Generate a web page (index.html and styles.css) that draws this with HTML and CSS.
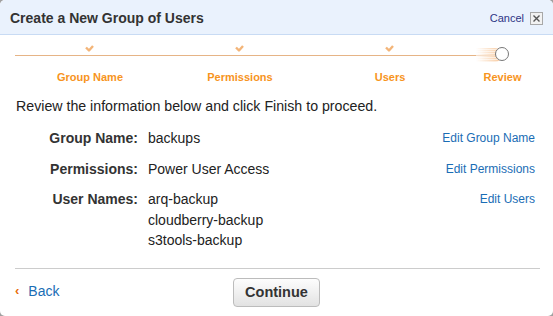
FILE: index.html
```html
<!DOCTYPE html>
<html>
<head>
<meta charset="utf-8">
<link rel="stylesheet" href="styles.css">
</head>
<body>
<div class="dialog">
  <div class="header">
    <div class="title">Create a New Group of Users</div>
    <div class="cancel">
      <span class="cancel-text">Cancel</span>
      <span class="close-box"><svg width="9" height="9" viewBox="0 0 9 9"><path d="M1.5 1.5 L7.5 7.5 M7.5 1.5 L1.5 7.5" stroke="#555" stroke-width="1.4" fill="none"/></svg></span>
    </div>
  </div>

  <div class="progress">
    <div class="track"></div>
    <div class="step">
      <div class="mark"><svg class="check" width="9" height="7" viewBox="0 0 9 7"><path d="M1 2.5 L4 5.5 L8 1" stroke="#f3b579" stroke-width="2.4" fill="none" stroke-linejoin="round"/></svg></div>
      <div class="label">Group Name</div>
    </div>
    <div class="step">
      <div class="mark"><svg class="check" width="9" height="7" viewBox="0 0 9 7"><path d="M1 2.5 L4 5.5 L8 1" stroke="#f3b579" stroke-width="2.4" fill="none" stroke-linejoin="round"/></svg></div>
      <div class="label">Permissions</div>
    </div>
    <div class="step">
      <div class="mark"><svg class="check" width="9" height="7" viewBox="0 0 9 7"><path d="M1 2.5 L4 5.5 L8 1" stroke="#f3b579" stroke-width="2.4" fill="none" stroke-linejoin="round"/></svg></div>
      <div class="label">Users</div>
    </div>
    <div class="step current">
      <div class="mark"><span class="glow"></span><span class="circle"></span></div>
      <div class="label">Review</div>
    </div>
  </div>

  <p class="intro">Review the information below and click Finish to proceed.</p>

  <div class="summary">
    <div class="key">Group Name:</div>
    <div class="val">backups</div>
    <a class="edit" href="#">Edit Group Name</a>

    <div class="key">Permissions:</div>
    <div class="val">Power User Access</div>
    <a class="edit" href="#">Edit Permissions</a>

    <div class="key">User Names:</div>
    <div class="val">arq-backup<br>cloudberry-backup<br>s3tools-backup</div>
    <a class="edit" href="#">Edit Users</a>
  </div>

  <div class="divider"></div>

  <div class="footer">
    <a class="back" href="#"><span class="chev">&lsaquo;</span>Back</a>
    <button class="continue">Continue</button>
    <span></span>
  </div>
</div>
</body>
</html>
```

FILE: styles.css
```css
html, body {
  margin: 0;
  padding: 0;
}
body {
  background: #a0a0a0;
  font-family: "Liberation Sans", Arial, Helvetica, sans-serif;
  color: #333;
}
.dialog {
  width: 553px;
  height: 316px;
  background: #fff;
  border-radius: 5px;
  overflow: hidden;
}
.header {
  box-sizing: border-box;
  height: 35px;
  border-bottom: 1px solid #c8dbf4;
  background: #eaf2fd;
  display: flex;
  align-items: center;
  justify-content: space-between;
  padding: 0 10px 0 10px;
}
.title {
  font-size: 14px;
  font-weight: bold;
  color: #333;
  padding-top: 1px;
}
.cancel {
  display: flex;
  align-items: center;
  gap: 6px;
  padding-top: 2px;
}
.cancel-text {
  font-size: 11px;
  color: #2e3585;
}
.close-box {
  width: 11px;
  height: 11px;
  border: 1px solid #a8a8a8;
  background: #f2f2f2;
  display: flex;
  align-items: center;
  justify-content: center;
}
.progress {
  position: relative;
  margin: 10px 13px 0 15px;
  display: grid;
  grid-template-columns: 150px 150px 150px 1fr;
}
.track {
  position: absolute;
  left: 0;
  right: 38px;
  top: 10px;
  height: 1px;
  background: #e6b486;
}
.step {
  display: flex;
  flex-direction: column;
  align-items: center;
}
.mark {
  position: relative;
  height: 20px;
  width: 14px;
}
.check {
  position: absolute;
  left: 2px;
  top: 0;
}
.circle {
  position: absolute;
  left: -1px;
  top: 2px;
  width: 12px;
  height: 12px;
  border: 1.5px solid #777;
  border-radius: 50%;
  background: #fff;
}
.glow {
  position: absolute;
  right: 8px;
  top: 3px;
  width: 26px;
  height: 14px;
  background:
    repeating-linear-gradient(to bottom, rgba(255,255,255,0) 0, rgba(255,255,255,0) 1px, rgba(255,255,255,0.55) 1px, rgba(255,255,255,0.55) 2px),
    linear-gradient(to right, rgba(246,190,140,0) 0%, rgba(246,186,130,0.8) 100%);
  border-radius: 0 7px 7px 0;
}
.label {
  margin-top: 5px;
  font-size: 11px;
  line-height: 14px;
  font-weight: bold;
  color: #f7941d;
  white-space: nowrap;
}
.intro {
  margin: 14px 0 0 16px;
  font-size: 14.2px;
  line-height: 17px;
  color: #222;
}
.summary {
  margin: 13px 18px 0 15px;
  display: grid;
  grid-template-columns: 123px 1fr auto;
  column-gap: 10px;
  row-gap: 10px;
  font-size: 14px;
  line-height: 20px;
}
.key {
  text-align: right;
  font-weight: bold;
  color: #333;
}
.val {
  color: #222;
  line-height: 20.5px;
}
.edit {
  font-size: 12px;
  color: #1a6db5;
  text-decoration: none;
  text-align: right;
}
.divider {
  margin: 17px 13px 0 15px;
  height: 1px;
  background: #cccccc;
}
.footer {
  margin: 9px 0 0 0;
  display: grid;
  grid-template-columns: 1fr auto 1fr;
  align-items: center;
}
.back {
  justify-self: start;
  margin-left: 15px;
  font-size: 14px;
  color: #1a6db5;
  text-decoration: none;
  display: flex;
  align-items: center;
  margin-top: -2px;
}
.chev {
  color: #e86b0a;
  font-weight: bold;
  font-size: 13px;
  margin-right: 9px;
  margin-top: -2px;
}
.continue {
  width: 87px;
  height: 29px;
  border: 1px solid #bcbcbc;
  border-radius: 4px;
  background: linear-gradient(to bottom, #fdfdfd 0%, #f0f0f0 50%, #e2e2e2 100%);
  font-family: "Liberation Sans", Arial, Helvetica, sans-serif;
  font-size: 14.5px;
  font-weight: bold;
  color: #333;
  padding: 0;
}
```
